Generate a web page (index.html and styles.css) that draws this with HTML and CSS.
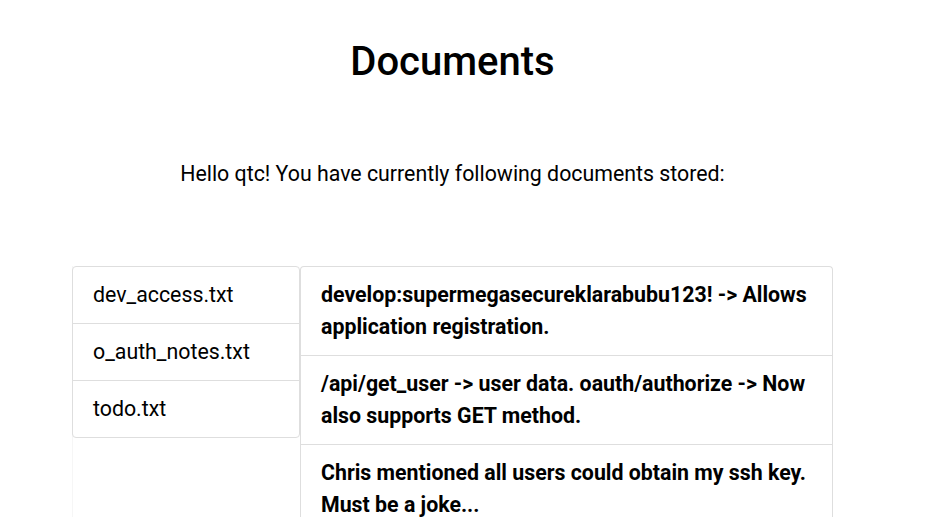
FILE: index.html
```html
<!DOCTYPE html>
<html>
<head>
<meta charset="utf-8">
<link rel="stylesheet" href="styles.css">
</head>
<body>
<main class="page">
  <h1 class="title">Documents</h1>
  <p class="intro">Hello qtc! You have currently following documents stored:</p>
  <div class="docs">
    <div class="files">
      <ul class="list">
        <li class="item">dev_access.txt</li>
        <li class="item">o_auth_notes.txt</li>
        <li class="item">todo.txt</li>
      </ul>
    </div>
    <div class="contents">
      <ul class="list">
        <li class="item strong">develop:supermegasecureklarabubu123! -&gt; Allows application registration.</li>
        <li class="item strong">/api/get_user -&gt; user data. oauth/authorize -&gt; Now also supports GET method.</li>
        <li class="item strong">Chris mentioned all users could obtain my ssh key. Must be a joke...</li>
      </ul>
    </div>
  </div>
</main>
</body>
</html>
```
FILE: styles.css
```css
html, body {
  margin: 0;
  padding: 0;
  background: #fff;
}
body {
  font-family: Roboto, "Liberation Sans", sans-serif;
  color: #000;
  overflow: hidden;
}
.page {
  width: 905px;
  display: flex;
  flex-direction: column;
  align-items: center;
}
.title {
  margin: 38px 0 0;
  font-size: 40px;
  font-weight: 500;
  line-height: 48px;
}
.intro {
  margin: 72px 0 0;
  font-size: 21.33px;
  line-height: 32px;
}
.docs {
  margin-top: 76px;
  width: 761px;
  display: flex;
  align-items: stretch;
}
.files {
  width: 228px;
  flex: none;
  border-left: 1px solid #f6f6f6;
  box-sizing: border-box;
}
.files .list {
  margin-left: -1px;
}
.contents {
  flex: 1;
}
.list {
  list-style: none;
  margin: 0;
  padding: 0;
  border: 1px solid #dedede;
  border-radius: 4px;
}
.item {
  font-size: 21.33px;
  line-height: 32px;
  padding: 12px 20px;
  border-top: 1px solid #dedede;
}
.item:first-child {
  border-top: none;
}
.contents .list {
  border-bottom: none;
}
.strong {
  font-weight: 700;
}
```
